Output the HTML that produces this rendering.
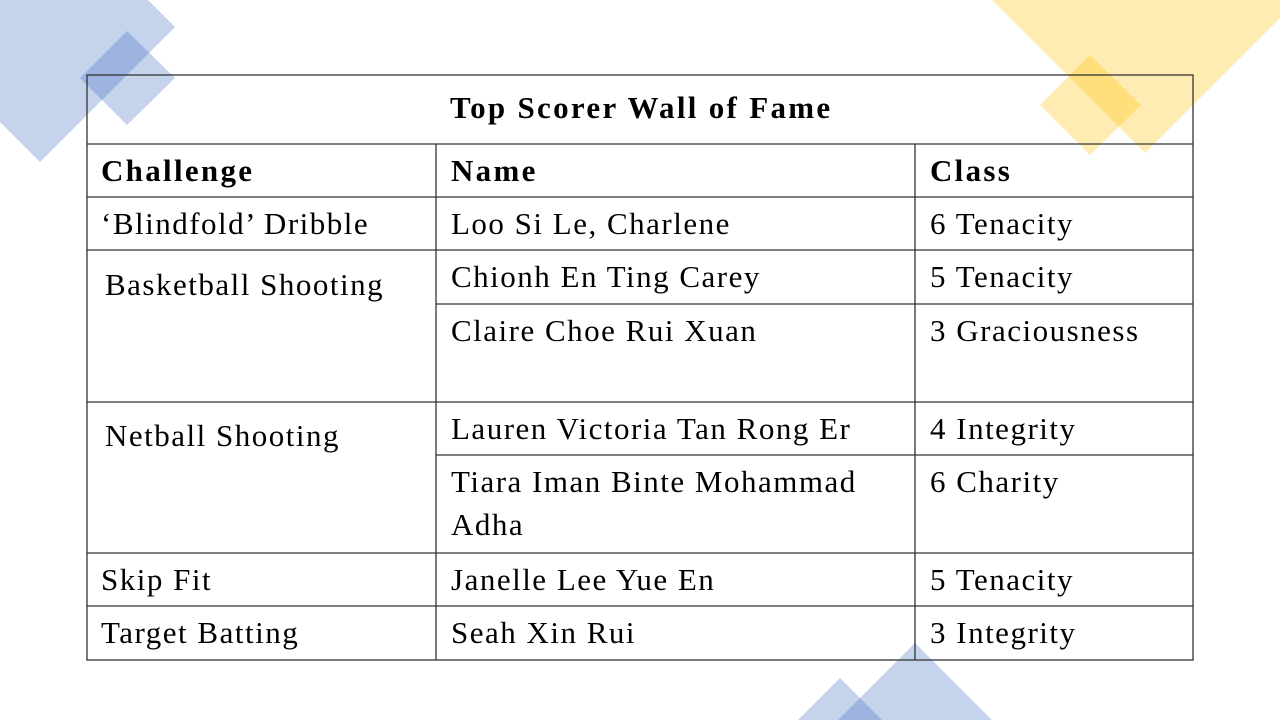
<!DOCTYPE html>
<html><head><meta charset="utf-8"><style>
body{margin:0;width:1280px;height:720px;background:#fff;position:relative;overflow:hidden;font-family:"Liberation Serif","DejaVu Serif",serif;color:#000}
.t{position:absolute;font-size:31px;line-height:40px;white-space:nowrap;letter-spacing:1.5px}
.b{font-weight:bold;letter-spacing:2.3px}
svg{position:absolute;left:0;top:0}
</style></head><body>
<svg width="1280" height="720">
<g fill="rgba(68,114,196,0.31)">
<polygon points="40,-108 175,27 40,162 -95,27"/>
<polygon points="127,31 175,78 127,125 80,78"/>
<polygon points="915,643 992,720 838,720"/>
<polygon points="840,678 882,720 798,720"/>
</g>
<g fill="rgba(255,192,0,0.3)">
<polygon points="992,0 1280,0 1280,18 1145,153"/>
<polygon points="1090,55 1141,105 1090,155 1040,105"/>
</g>
<g stroke="#333" stroke-width="1.3" fill="none">
<rect x="87" y="75" width="1106" height="585"/>
<line x1="87" y1="144" x2="1193" y2="144"/>
<line x1="87" y1="197" x2="1193" y2="197"/>
<line x1="87" y1="250" x2="1193" y2="250"/>
<line x1="436" y1="304" x2="1193" y2="304"/>
<line x1="87" y1="402" x2="1193" y2="402"/>
<line x1="436" y1="455" x2="1193" y2="455"/>
<line x1="87" y1="553" x2="1193" y2="553"/>
<line x1="87" y1="606" x2="1193" y2="606"/>
<line x1="436" y1="144" x2="436" y2="660"/>
<line x1="915" y1="144" x2="915" y2="660"/>
</g>
</svg>
<div class="t b" style="left:450px;top:88px">Top Scorer Wall of Fame</div>
<div class="t b" style="left:101px;top:151px">Challenge</div>
<div class="t b" style="left:451px;top:151px">Name</div>
<div class="t b" style="left:930px;top:151px">Class</div>
<div class="t" style="left:101px;top:204px">‘Blindfold’ Dribble</div>
<div class="t" style="left:451px;top:204px">Loo Si Le, Charlene</div>
<div class="t" style="left:930px;top:204px">6 Tenacity</div>
<div class="t" style="left:105px;top:265px">Basketball Shooting</div>
<div class="t" style="left:451px;top:257px">Chionh En Ting Carey</div>
<div class="t" style="left:930px;top:257px">5 Tenacity</div>
<div class="t" style="left:451px;top:311px">Claire Choe Rui Xuan</div>
<div class="t" style="left:930px;top:311px">3 Graciousness</div>
<div class="t" style="left:105px;top:416px">Netball Shooting</div>
<div class="t" style="left:451px;top:409px">Lauren Victoria Tan Rong Er</div>
<div class="t" style="left:930px;top:409px">4 Integrity</div>
<div class="t" style="left:451px;top:462px">Tiara Iman Binte Mohammad</div>
<div class="t" style="left:451px;top:505px">Adha</div>
<div class="t" style="left:930px;top:462px">6 Charity</div>
<div class="t" style="left:101px;top:560px">Skip Fit</div>
<div class="t" style="left:451px;top:560px">Janelle Lee Yue En</div>
<div class="t" style="left:930px;top:560px">5 Tenacity</div>
<div class="t" style="left:101px;top:613px">Target Batting</div>
<div class="t" style="left:451px;top:613px">Seah Xin Rui</div>
<div class="t" style="left:930px;top:613px">3 Integrity</div>
</body></html>
